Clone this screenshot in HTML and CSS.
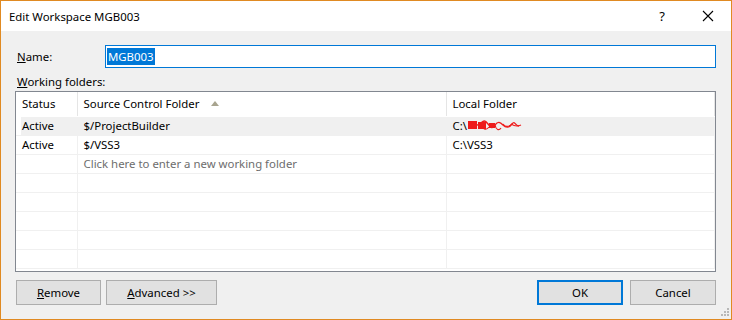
FILE: index.html
```html
<!DOCTYPE html>
<html lang="en">
<head>
	<meta charset="UTF-8">
	<title>Edit Workspace MGB003</title>
	<link rel="stylesheet" href="styles.css">
</head>
<body>
	<div class="dlg">
		<div class="titlebar">
			<span class="title">Edit Workspace MGB003</span>
			<span class="tbtn help">?</span>
			<span class="tbtn close">
				<svg width="12" height="12" viewBox="0 0 12 12"><path d="M1 1L11 11M11 1L1 11" stroke="#000" stroke-width="1.1"/></svg>
			</span>
		</div>
		<div class="content">
			<div class="namerow">
				<label class="lbl"><u>N</u>ame:</label>
				<div class="textbox"><span class="sel">MGB003</span></div>
			</div>
			<div class="lbl wf"><u>W</u>orking folders:</div>
			<div class="listbox">
				<table class="grid">
					<colgroup>
						<col class="c1">
						<col class="c2">
						<col class="c3">
						<col class="c4">
					</colgroup>
					<tr class="head">
						<td>Status</td>
						<td>Source Control Folder <span class="sort"></span></td>
						<td>Local Folder</td>
						<td class="pad"></td>
					</tr>
					<tr class="cur">
						<td>Active</td>
						<td>$/ProjectBuilder</td>
						<td>C:\<span class="redact"><svg width="56" height="13" viewBox="0 0 56 13"><path d="M1 2h9v8H1z M11 3h8v7h-8z M22 4h6v5h-6z" fill="#ee1c1c"/><path d="M3 4c4 -3 6 5 10 1s5 -4 8 0 4 5 7 1 5 -3 8 0 6 3 9 -1 3 2 7 2" stroke="#ee1c1c" stroke-width="1.4" fill="none"/><path d="M14 7c3 3 5 5 8 1M28 6c1 5 4 6 6 3M36 5c2 3 5 3 8 1M44 5c3 2 6 3 10 1" stroke="#ee1c1c" stroke-width="1.2" fill="none"/></svg></span></td>
						<td class="pad"></td>
					</tr>
					<tr>
						<td>Active</td>
						<td>$/VSS3</td>
						<td>C:\VSS3</td>
						<td class="pad"></td>
					</tr>
					<tr>
						<td></td>
						<td class="hint">Click here to enter a new working folder</td>
						<td></td>
						<td class="pad"></td>
					</tr>
					<tr><td></td><td></td><td></td><td class="pad"></td></tr>
					<tr><td></td><td></td><td></td><td class="pad"></td></tr>
					<tr><td></td><td></td><td></td><td class="pad"></td></tr>
					<tr><td></td><td></td><td></td><td class="pad"></td></tr>
					<tr><td></td><td></td><td></td><td class="pad"></td></tr>
				</table>
			</div>
			<div class="btnrow">
				<button class="btn remove"><u>R</u>emove</button>
				<button class="btn advanced"><u>A</u>dvanced &gt;&gt;</button>
				<span class="spacer"></span>
				<button class="btn ok">OK</button>
				<button class="btn cancel">Cancel</button>
			</div>
		</div>
		<svg class="grip" width="10" height="10" viewBox="0 0 10 10">
			<rect x="7" y="0" width="2" height="2" fill="#b8b8b8"/>
			<rect x="4" y="3" width="2" height="2" fill="#b8b8b8"/>
			<rect x="7" y="3" width="2" height="2" fill="#b8b8b8"/>
			<rect x="1" y="6" width="2" height="2" fill="#b8b8b8"/>
			<rect x="4" y="6" width="2" height="2" fill="#b8b8b8"/>
			<rect x="7" y="6" width="2" height="2" fill="#b8b8b8"/>
		</svg>
	</div>
</body>
</html>
```

FILE: styles.css
```css
*{
	margin: 0;
	padding: 0;
	box-sizing: border-box;
}
body{
	font-family: "Noto Sans", "Liberation Sans", sans-serif;
	font-size: 11.4px;
	color: #000;
	background: #fff;
}
.dlg{
	width: 732px;
	height: 320px;
	border: 1px solid #e08a22;
	background: #f0f0f0;
	position: relative;
	display: flex;
	flex-direction: column;
}
.titlebar{
	height: 30px;
	background: #fff;
	display: flex;
	align-items: center;
}
.title{
	padding-left: 8px;
	flex: 1;
	font-size: 11.4px;
}
.tbtn{
	display: flex;
	align-items: center;
	justify-content: center;
	height: 30px;
}
.help{
	width: 46px;
	font-size: 13px;
}
.close{
	width: 46px;
}
.content{
	flex: 1;
	padding: 14px 15px 0 14px;
	display: flex;
	flex-direction: column;
}
.namerow{
	display: flex;
	align-items: center;
	height: 23px;
}
.lbl{
	padding-left: 2px;
}
.namerow .lbl{
	width: 90px;
}
.textbox{
	flex: 1;
	height: 23px;
	border: 1px solid #0078d7;
	background: #fff;
	display: flex;
	align-items: center;
	padding-left: 1px;
}
.sel{
	background: #0078d7;
	color: #fff;
	padding: 0 1px;
	line-height: 17px;
}
.wf{
	margin-top: 7px;
	height: 16px;
	line-height: 14px;
}
.listbox{
	height: 181px;
	border: 1px solid #828790;
	background: #fff;
	overflow: hidden;
}
.grid{
	border-collapse: collapse;
	table-layout: fixed;
	width: 700px;
}
.c1{ width: 61px; }
.c2{ width: 369px; }
.c3{ width: 268px; }
.c4{ width: 2px; }
.grid td{
	height: 19px;
	border-right: 1px solid #f0f0f0;
	border-bottom: 1px solid #f0f0f0;
	padding: 0 0 0 6px;
	white-space: nowrap;
	overflow: hidden;
	vertical-align: middle;
}
.grid td.pad{
	border-right: none;
	padding: 0;
}
.grid .head td{
	height: 24px;
	border-bottom: 1px solid #fff;
	border-right: 1px solid #e5e5e5;
}
.grid .head td.pad{
	border-right: none;
}
.sort{
	display: inline-block;
	width: 0;
	height: 0;
	border-left: 4px solid transparent;
	border-right: 4px solid transparent;
	border-bottom: 5px solid #a8a48f;
	margin-left: 9px;
	vertical-align: 2px;
}
.grid .cur td{
	background: #f0f0f0;
	border-right-color: #f0f0f0;
}
.grid .cur td:first-child{
	background: linear-gradient(90deg, #fff 5px, #f0f0f0 5px);
}
.grid .cur td.pad{
	background: #fff;
}
.redact svg{
	vertical-align: -2px;
}
.hint{
	color: #6d6d6d;
}
.btnrow{
	display: flex;
	margin-top: 8px;
	padding-left: 1px;
}
.btn{
	height: 25px;
	font-family: "Noto Sans", "Liberation Sans", sans-serif;
	font-size: 11.4px;
	background: #e1e1e1;
	border: 1px solid #adadad;
	color: #000;
}
.remove{ width: 85px; }
.advanced{ width: 111px; margin-left: 5px; }
.spacer{ flex: 1; }
.ok{
	width: 86px;
	border: 2px solid #0078d7;
}
.cancel{ width: 86px; margin-left: 7px; }
.grip{
	position: absolute;
	right: 1px;
	bottom: 1px;
}
```
